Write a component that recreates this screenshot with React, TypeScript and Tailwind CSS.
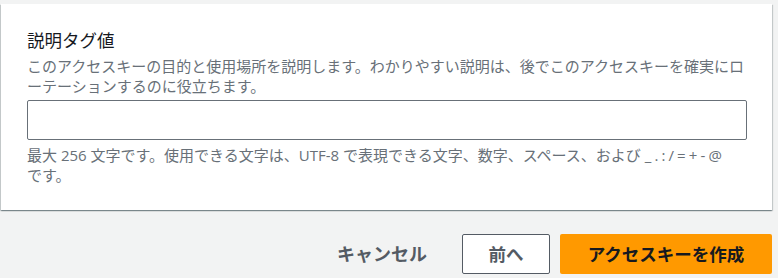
export default function App() {
  return (
    <div
      className="min-h-[278px] w-full bg-[#f2f3f3] pt-[4px] pl-[1px] pr-[6px]"
      style={{ fontFamily: '"Open Sans", "Noto Sans CJK JP", sans-serif' }}
    >
      <div className="bg-white pl-[26px] pr-[25px] pt-[23px] pb-[25px] shadow-[0_1px_1px_0_rgba(0,28,36,0.3),1px_1px_1px_0_rgba(0,28,36,0.15),-1px_1px_1px_0_rgba(0,28,36,0.15)]">
        <label className="mb-[3px] block text-[17.5px] leading-[26px] text-[#16191f]">説明タグ値</label>
        <p className="text-[15px] leading-[20px] text-[#687078] whitespace-nowrap">
          このアクセスキーの目的と使用場所を説明します。わかりやすい説明は、後でこのアクセスキーを確実にロ
          <br />
          ーテーションするのに役立ちます。
        </p>
        <input
          type="text"
          className="mt-[4px] block h-[40px] w-full rounded-[2px] border border-[#687078] bg-white px-3 outline-none"
        />
        <p className="mt-[5px] text-[15px] leading-[20px] text-[#687078] whitespace-nowrap">
          最大 256 文字です。使用できる文字は、UTF-8 で表現できる文字、数字、スペース、および{' '}
          <span className="tracking-[-0.4px]">_ . : / = + - @</span>
          <br />
          です。
        </p>
      </div>
      <div className="mt-[24px] flex items-center justify-end gap-[10px]">
        <button className="h-[40px] pl-[20px] pr-[25px] text-[18px] font-bold text-[#545b64]">キャンセル</button>
        <button className="h-[40px] w-[88px] rounded-[2px] border border-[#545b64] bg-white text-[17.5px] font-bold text-[#545b64]">
          前へ
        </button>
        <button className="h-[40px] w-[212px] rounded-[2px] bg-[#ff9900] text-[17.5px] font-bold text-[#16191f]">
          アクセスキーを作成
        </button>
      </div>
    </div>
  )
}
